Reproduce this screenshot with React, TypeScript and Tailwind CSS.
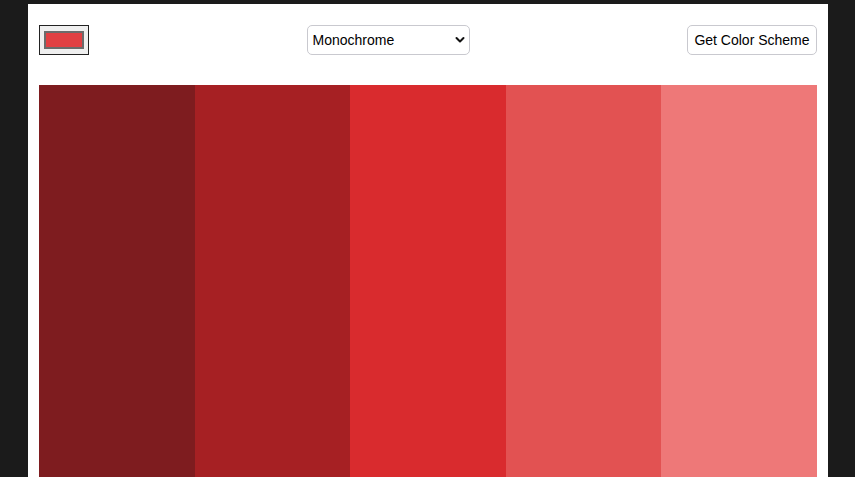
const shades = ["#7e1c1f", "#a62023", "#d92b2e", "#e25252", "#ee7878"];

function ColorPicker() {
  return (
    <div className="flex h-[30px] w-[50px] items-center justify-center border border-[#222] bg-[#efefef]">
      <div className="h-[18px] w-[40px] border-2 border-[#6b6b6b] bg-[#e04043]" />
    </div>
  );
}

function SchemeSelect() {
  return (
    <div className="flex h-[30px] w-[163px] items-center justify-between rounded-[5px] border border-[#c9c9cf] bg-white pl-[5px] pr-[4px]">
      <span className="text-[14px] text-black">Monochrome</span>
      <svg width="10" height="8" viewBox="0 0 10 8" fill="none">
        <path d="M1.5 2 L5 5.5 L8.5 2" stroke="#111" strokeWidth="2" strokeLinecap="round" strokeLinejoin="round" />
      </svg>
    </div>
  );
}

export default function App() {
  return (
    <div
      className="h-[477px] overflow-hidden bg-[#1b1b1b] pt-[4px]"
      style={{ fontFamily: "'Liberation Sans', Arial, sans-serif" }}
    >
      <div className="ml-[28px] w-[800px] bg-white px-[11px] pt-[21px]">
        <header className="flex items-center justify-between">
          <ColorPicker />
          <SchemeSelect />
          <button className="h-[30px] w-[130px] rounded-[5px] border border-[#c9c9cf] bg-white text-[14px] text-black">
            Get Color Scheme
          </button>
        </header>

        <div className="mt-[30px] flex h-[400px]">
          {shades.map((c) => (
            <div key={c} className="flex-1" style={{ backgroundColor: c }} />
          ))}
        </div>
      </div>
    </div>
  );
}
